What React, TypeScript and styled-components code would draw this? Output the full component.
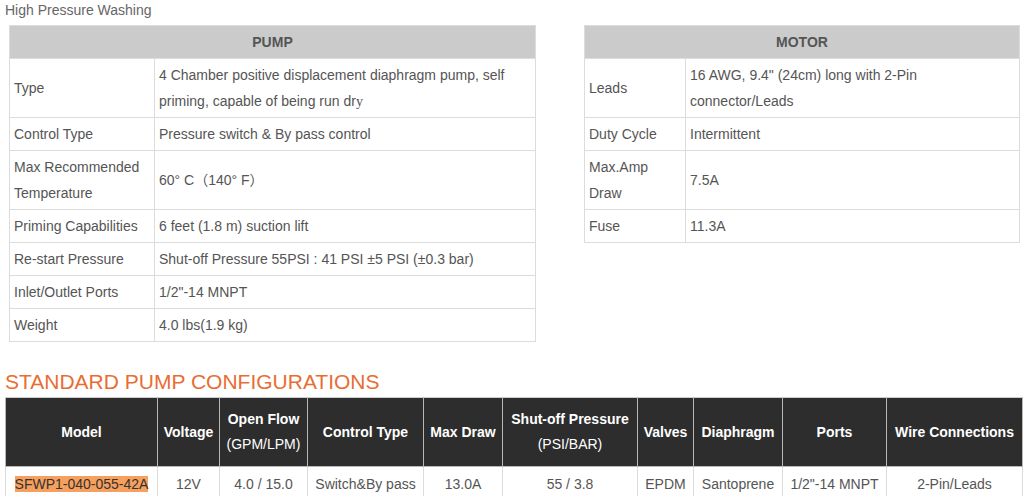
import styled, { createGlobalStyle } from "styled-components";

const GlobalStyle = createGlobalStyle`
  body {
    margin: 0;
    background: #ffffff;
    font-family: "Liberation Sans", Arial, "Noto Sans CJK SC", sans-serif;
    color: #555;
  }
`;

const Page = styled.div`
  width: 1024px;
  height: 496px;
  overflow: hidden;
`;

const Intro = styled.p`
  margin: 0 0 5px 5px;
  font-size: 14px;
  line-height: 20px;
  color: #666;
`;

const SpecRow = styled.div`
  display: flex;
  align-items: flex-start;
  padding-left: 9px;
  gap: 48px;
`;

const SpecTable = styled.table<{ width: number }>`
  width: ${(p) => p.width}px;
  border-collapse: collapse;
  table-layout: fixed;
  font-size: 14px;
  line-height: 26px;
  color: #555;
`;

const SpecHead = styled.th`
  background: #cbcbcb;
  border: 1px solid #dcdcdc;
  padding: 3px 4px;
  height: 26px;
  box-sizing: content-box;
  font-weight: bold;
  text-align: center;
  color: #555;
`;

const SpecCell = styled.td`
  border: 1px solid #dcdcdc;
  padding: 3px 4px;
  vertical-align: middle;
  text-align: left;
`;

const SerifY = styled.span`
  font-family: "Liberation Serif", serif;
  line-height: 1;
`;

const Wide = styled.span`
  font-family: "Noto Sans CJK SC", sans-serif;
  line-height: 1;
`;

const SectionTitle = styled.h2`
  margin: 28px 0 3px 5px;
  font-size: 21px;
  line-height: 24px;
  font-weight: normal;
  color: #e96d33;
  text-transform: uppercase;
`;

const ConfigTable = styled.table`
  margin-left: 5px;
  width: 1017px;
  border-collapse: collapse;
  table-layout: fixed;
  font-size: 14px;
  color: #555;
`;

const ConfigHead = styled.th`
  background: #2d2d2d;
  color: #fff;
  border: 1px solid #b8b8b8;
  border-top-color: #cfcfcf;
  padding: 9px 3px;
  line-height: 25px;
  font-weight: bold;
  text-align: center;
  vertical-align: middle;
`;

const SubLabel = styled.span`
  font-weight: normal;
`;

const ConfigCell = styled.td`
  border: 1px solid #dcdcdc;
  padding: 4px 3px;
  line-height: 26px;
  text-align: center;
  white-space: nowrap;
`;

const Highlight = styled.span`
  background: #f7a05e;
  color: #333;
`;

type Spec = { label: React.ReactNode; value: React.ReactNode };

const pumpSpecs: Spec[] = [
  {
    label: "Type",
    value: (
      <>
        4 Chamber positive displacement diaphragm pump, self priming, capable of
        being run dr<SerifY>y</SerifY>
      </>
    ),
  },
  { label: "Control Type", value: "Pressure switch & By pass control" },
  {
    label: "Max Recommended Temperature",
    value: (
      <>
        60° C<Wide>（</Wide>140° F<Wide>）</Wide>
      </>
    ),
  },
  { label: "Priming Capabilities", value: "6 feet (1.8 m) suction lift" },
  {
    label: "Re-start Pressure",
    value: "Shut-off Pressure 55PSI : 41 PSI ±5 PSI (±0.3 bar)",
  },
  { label: "Inlet/Outlet Ports", value: '1/2"-14 MNPT' },
  { label: "Weight", value: "4.0 lbs(1.9 kg)" },
];

const motorSpecs: Spec[] = [
  { label: "Leads", value: '16 AWG, 9.4" (24cm) long with 2-Pin connector/Leads' },
  { label: "Duty Cycle", value: "Intermittent" },
  { label: "Max.Amp Draw", value: "7.5A" },
  { label: "Fuse", value: "11.3A" },
];

const columns: { title: string; sub?: string; width: number }[] = [
  { title: "Model", width: 152 },
  { title: "Voltage", width: 62 },
  { title: "Open Flow", sub: "(GPM/LPM)", width: 88 },
  { title: "Control Type", width: 116 },
  { title: "Max Draw", width: 79 },
  { title: "Shut-off Pressure", sub: "(PSI/BAR)", width: 135 },
  { title: "Valves", width: 56 },
  { title: "Diaphragm", width: 89 },
  { title: "Ports", width: 104 },
  { title: "Wire Connections", width: 136 },
];

const configRow = [
  "12V",
  "4.0 / 15.0",
  "Switch&By pass",
  "13.0A",
  "55 / 3.8",
  "EPDM",
  "Santoprene",
  '1/2"-14 MNPT',
  "2-Pin/Leads",
];

const SpecBlock = ({
  title,
  width,
  labelWidth,
  rows,
}: {
  title: string;
  width: number;
  labelWidth: number;
  rows: Spec[];
}) => (
  <SpecTable width={width}>
    <colgroup>
      <col style={{ width: labelWidth }} />
      <col />
    </colgroup>
    <thead>
      <tr>
        <SpecHead colSpan={2}>{title}</SpecHead>
      </tr>
    </thead>
    <tbody>
      {rows.map((r, i) => (
        <tr key={i}>
          <SpecCell>{r.label}</SpecCell>
          <SpecCell>{r.value}</SpecCell>
        </tr>
      ))}
    </tbody>
  </SpecTable>
);

const App = () => {
  return (
    <Page>
      <GlobalStyle />
      <Intro>High Pressure Washing</Intro>
      <SpecRow>
        <SpecBlock title="PUMP" width={527} labelWidth={145} rows={pumpSpecs} />
        <SpecBlock title="MOTOR" width={436} labelWidth={101} rows={motorSpecs} />
      </SpecRow>

      <SectionTitle>Standard Pump Configurations</SectionTitle>
      <ConfigTable>
        <colgroup>
          {columns.map((c) => (
            <col key={c.title} style={{ width: c.width }} />
          ))}
        </colgroup>
        <thead>
          <tr>
            {columns.map((c) => (
              <ConfigHead key={c.title}>
                {c.title}
                {c.sub && (
                  <>
                    <br />
                    <SubLabel>{c.sub}</SubLabel>
                  </>
                )}
              </ConfigHead>
            ))}
          </tr>
        </thead>
        <tbody>
          <tr>
            <ConfigCell>
              <Highlight>SFWP1-040-055-42A</Highlight>
            </ConfigCell>
            {configRow.map((v, i) => (
              <ConfigCell key={i}>{v}</ConfigCell>
            ))}
          </tr>
        </tbody>
      </ConfigTable>
    </Page>
  );
};

export default App;
